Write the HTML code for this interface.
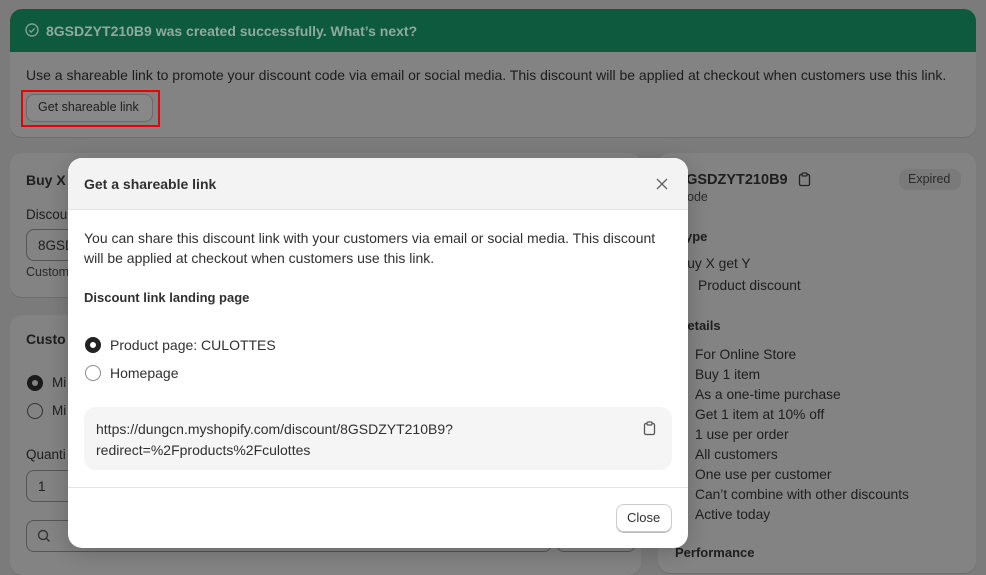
<!DOCTYPE html><html><head><style>
*{box-sizing:border-box;margin:0;padding:0}
body{width:986px;height:559px;overflow:hidden;background:#7b7b7b;font-family:"Liberation Sans",sans-serif;font-size:13px;color:#1e1e1e;position:relative}
.card{position:absolute;background:#838383;border-radius:12px;box-shadow:0 1px 0 #6e6e6e}
.t{position:absolute;white-space:nowrap}
</style></head><body>
<div class="card" style="left:10px;top:9px;width:966px;height:128px;overflow:hidden">
 <div style="background:#0d5a3e;height:43px;position:relative">
  <svg style="position:absolute;left:15px;top:14px" width="14" height="14" viewBox="0 0 14 14"><circle cx="7" cy="7" r="6" fill="none" stroke="#7fa090" stroke-width="1.4"/><path d="M4.3 7.2l1.9 1.9 3.6-3.8" fill="none" stroke="#7fa090" stroke-width="1.4"/></svg>
  <div class="t" style="left:36px;top:14px;color:#8fab9d;font-weight:bold;font-size:14px">8GSDZYT210B9 was created successfully. What’s next?</div>
 </div>
 <div class="t" style="left:16px;top:58px;color:#1c1c1c;font-size:14px">Use a shareable link to promote your discount code via email or social media. This discount will be applied at checkout when customers use this link.</div>
 <div style="position:absolute;left:11px;top:81px;width:139px;height:37px;border:2px solid #e00"></div>
 <div style="position:absolute;left:16px;top:85px;width:127px;height:28px;border:1px solid #6a6a6a;border-radius:8px;background:#888"></div>
 <div class="t" style="left:28px;top:91px;font-size:12.5px">Get shareable link</div>
</div>
<div class="card" style="left:10px;top:153px;width:631px;height:144px">
 <div class="t" style="left:16px;top:19px;font-weight:bold;font-size:14px">Buy X</div>
 <div class="t" style="left:16px;top:54px;font-size:13.5px">Discou</div>
 <div style="position:absolute;left:16px;top:76px;width:60px;height:32px;border:1px solid #555;border-radius:8px"></div>
 <div class="t" style="left:28px;top:85px;font-size:13.5px">8GSD</div>
 <div class="t" style="left:16px;top:112px;font-size:12.5px;color:#2a2a2a">Custom</div>
</div>
<div class="card" style="left:10px;top:315px;width:631px;height:260px">
 <div class="t" style="left:16px;top:16px;font-weight:bold;font-size:14px">Custo</div>
 <div style="position:absolute;left:17px;top:60px;width:16px;height:16px;border:5px solid #1a1a1a;border-radius:50%"></div>
 <div class="t" style="left:42px;top:60px;font-size:13.5px">Mi</div>
 <div style="position:absolute;left:17px;top:88px;width:16px;height:16px;border:1px solid #333;border-radius:50%"></div>
 <div class="t" style="left:42px;top:88px;font-size:13.5px">Mi</div>
 <div class="t" style="left:16px;top:132px;font-size:13.5px">Quanti</div>
 <div style="position:absolute;left:16px;top:155px;width:70px;height:32px;border:1px solid #555;border-radius:8px"></div>
 <div class="t" style="left:28px;top:164px;font-size:13.5px">1</div>
 <div style="position:absolute;left:16px;top:205px;width:526px;height:32px;border:1px solid #555;border-radius:8px"></div>
 <svg style="position:absolute;left:27px;top:214px" width="14" height="14" viewBox="0 0 14 14"><circle cx="6" cy="6" r="4.5" fill="none" stroke="#333" stroke-width="1.4"/><path d="M9.5 9.5l3 3" stroke="#333" stroke-width="1.4"/></svg>
 <div style="position:absolute;left:546px;top:205px;width:80px;height:32px;border:1px solid #555;border-radius:8px"></div>
</div>
<div class="card" style="left:658px;top:153px;width:318px;height:420px">
 <div class="t" style="left:20px;top:19px;font-weight:bold;font-size:14.5px">8GSDZYT210B9</div>
 <svg style="position:absolute;left:140px;top:19px" width="13" height="15" viewBox="0 0 13 15"><rect x="1.5" y="2.5" width="10" height="11" rx="1.5" fill="none" stroke="#222" stroke-width="1.3"/><rect x="4" y="1" width="5" height="3" rx="1" fill="#838383" stroke="#222" stroke-width="1.2"/></svg>
 <div style="position:absolute;left:241px;top:16px;width:62px;height:21px;background:#7a7a7a;border-radius:8px"></div>
 <div class="t" style="left:250px;top:19px;font-size:12.5px;color:#2a2a2a">Expired</div>
 <div class="t" style="left:20px;top:37px;font-size:12.5px;color:#2a2a2a">Code</div>
 <div class="t" style="left:20px;top:76px;font-weight:bold;font-size:13px">Type</div>
 <div class="t" style="left:20px;top:103px;font-size:13.8px">Buy X get Y</div>
 <div class="t" style="left:40px;top:125px;font-size:13.8px">Product discount</div>
 <div class="t" style="left:20px;top:165px;font-weight:bold;font-size:13px">Details</div>
 <div class="t" style="left:37px;top:192px;font-size:13.8px;line-height:20px">For Online Store<br>Buy 1 item<br>As a one-time purchase<br>Get 1 item at 10% off<br>1 use per order<br>All customers<br>One use per customer<br>Can’t combine with other discounts<br>Active today</div>
 <div class="t" style="left:17px;top:392px;font-weight:bold;font-size:13px">Performance</div>
</div>
<div style="position:absolute;left:68px;top:158px;width:620px;height:390px;background:#fff;border-radius:14px;overflow:hidden;box-shadow:0 4px 20px rgba(0,0,0,.2)">
 <div style="height:52px;background:#f3f3f3;border-bottom:1px solid #e3e3e3;position:relative">
  <div class="t" style="left:16px;top:18px;font-weight:bold;font-size:14px;color:#303030">Get a shareable link</div>
  <svg style="position:absolute;left:588px;top:20px" width="12" height="12" viewBox="0 0 12 12"><path d="M1 1l10 10M11 1L1 11" stroke="#666" stroke-width="1.4"/></svg>
 </div>
 <div class="t" style="left:16px;top:70px;font-size:14px;line-height:20px;color:#303030">You can share this discount link with your customers via email or social media. This discount<br>will be applied at checkout when customers use this link.</div>
 <div class="t" style="left:16px;top:132px;font-weight:bold;font-size:13px;color:#303030">Discount link landing page</div>
 <div style="position:absolute;left:17px;top:179px;width:16px;height:16px;border:5px solid #222;border-radius:50%"></div>
 <div class="t" style="left:42px;top:179px;font-size:14px;color:#303030">Product page: CULOTTES</div>
 <div style="position:absolute;left:17px;top:207px;width:16px;height:16px;border:1px solid #8a8a8a;border-radius:50%"></div>
 <div class="t" style="left:42px;top:207px;font-size:14px;color:#303030">Homepage</div>
 <div style="position:absolute;left:16px;top:249px;width:588px;height:63px;background:#f5f5f5;border-radius:12px"></div>
 <div class="t" style="left:28px;top:261px;font-size:14px;line-height:21px;color:#303030">https://dungcn.myshopify.com/discount/8GSDZYT210B9?<br>redirect=%2Fproducts%2Fculottes</div>
 <svg style="position:absolute;left:575px;top:263px" width="13" height="15" viewBox="0 0 13 15"><rect x="1.5" y="2.5" width="10" height="11" rx="1.5" fill="none" stroke="#555" stroke-width="1.3"/><rect x="4" y="1" width="5" height="3" rx="1" fill="#f5f5f5" stroke="#555" stroke-width="1.2"/></svg>
 <div style="position:absolute;left:0;top:329px;width:620px;border-top:1px solid #e3e3e3"></div>
 <div style="position:absolute;left:548px;top:346px;width:56px;height:28px;border:1px solid #ccc;border-radius:8px;box-shadow:0 1px 0 #bbb"></div>
 <div class="t" style="left:559px;top:352px;font-size:13px;color:#303030">Close</div>
</div>
</body></html>
